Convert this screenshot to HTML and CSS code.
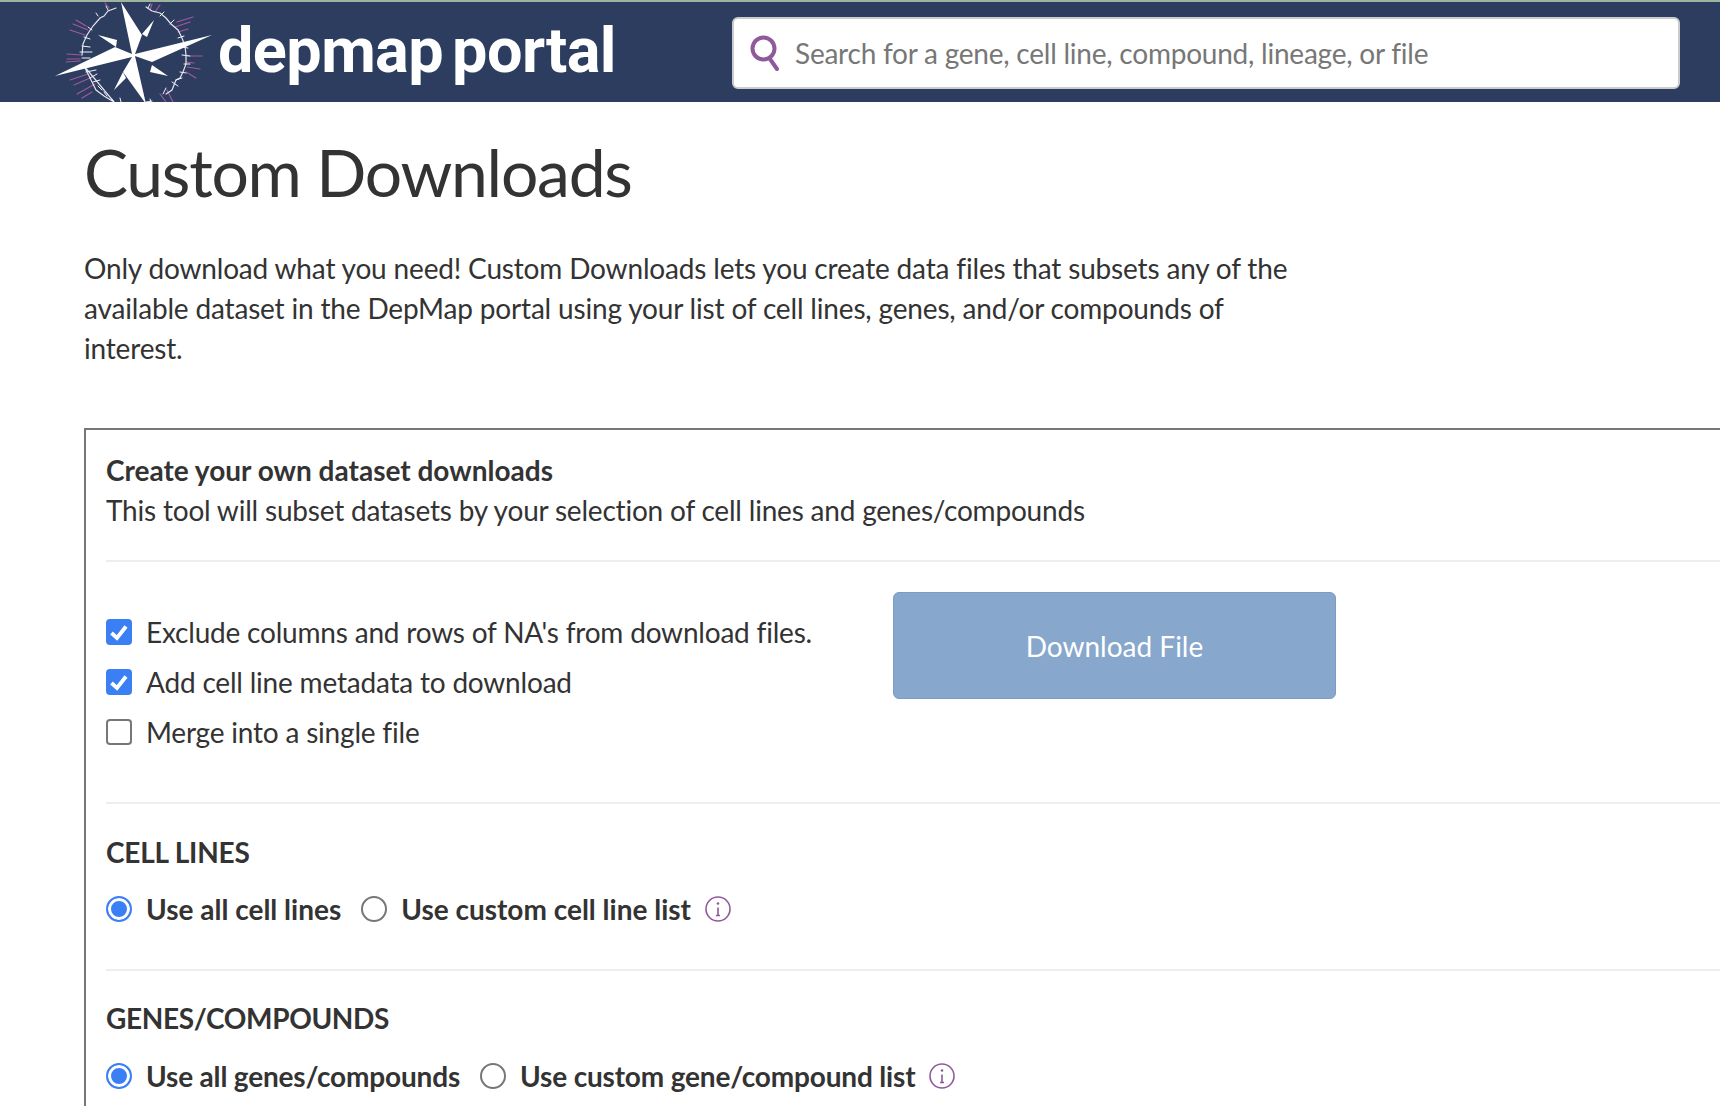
FILE: index.html
```html
<!DOCTYPE html>
<html lang="en">
<head>
  <meta charset="UTF-8">
  <title>Custom Downloads | DepMap Portal</title>
  <link rel="stylesheet" href="styles.css">
</head>
<body>

  <header class="topbar">
    <a class="brand" href="#">
      <svg class="brand-mark" viewBox="50 0 170 100" aria-hidden="true">
        <g fill="none" stroke-linecap="round">
          <path class="ticks-purple" d="M67 52L82 53M67 57L80 57M66 60L80 59M70 28L85 33M73 22L88 28M76 18L86 24M187 54L202 54M187 65L200 67M186 60L194 61M177 20L193 15M175 25L190 20M178 30L188 27M70 78L88 72M74 83L90 76M77 92L95 82M82 96L92 90M167 88L173 100M160 92L166 100M186 70L196 76M105 1L109 6M152 2L150 8M160 3L155 10M180 44L186 42"/>
          <path class="ring" d="M82 53L83 42L87 33L93 24L100 16L104 14L108 9L116 6M146 5L152 9L160 11L166 16L171 22L178 28L182 36L185 44L186 53L186 62L183 70L180 76L176 78L172 88L166 92M152 99L146 100M114 100L104 94L96 88L92 80L88 72L84 64Z"/>
          <path class="ticks-white" d="M84 35L90 37M82 44L90 45M80 50L92 50M82 56L90 56M83 62L88 61M86 70L96 68M90 76L97 72M93 80L100 78M98 84L102 88M104 90L107 94M112 97L114 100M120 96L121 100M150 97L151 100M163 92L166 86M172 80L178 84M176 78L182 76M180 70L186 71M184 62L190 62M182 53L190 54M182 45L188 46M178 36L184 34M170 22L174 18M160 14L164 10M148 6L150 2M108 8L106 4M98 14L96 11M88 25L92 28"/>
        </g>
        <path class="star" d="M121 0L142 33L135 52L212 33L152 60L135 54L146 102L123 70L132 55L55 74L115 45L132 52Z"/>
        <path class="star" d="M154 18L142 32L147 35ZM98 33L117 38L116 45ZM168 74L152 63L150 70ZM114 88L123 70L126 76Z"/>
      </svg>
      <span class="brand-name">depmap portal</span>
    </a>
    <div class="search">
      <svg class="search-icon" viewBox="0 0 31 36" aria-hidden="true">
        <circle cx="13.5" cy="13.5" r="11"/>
        <path d="M20 24L27 34"/>
      </svg>
      <span class="search-hint">Search for a gene, cell line, compound, lineage, or file</span>
    </div>
  </header>

  <main class="page">
    <h1>Custom Downloads</h1>
    <p class="intro">Only download what you need! Custom Downloads lets you create data files that subsets any of the available dataset in the DepMap portal using your list of cell lines, genes, and/or compounds of interest.</p>

    <section class="panel">
      <div class="panel-head">
        <strong>Create your own dataset downloads</strong><br>
        This tool will subset datasets by your selection of cell lines and genes/compounds
      </div>

      <div class="options">
        <div class="checks">
          <label class="check-row">
            <span class="box on"><svg viewBox="0 0 26 26"><path d="M5.5 14L11 19L20 7.5"/></svg></span>
            Exclude columns and rows of NA's from download files.
          </label>
          <label class="check-row">
            <span class="box on"><svg viewBox="0 0 26 26"><path d="M5.5 14L11 19L20 7.5"/></svg></span>
            Add cell line metadata to download
          </label>
          <label class="check-row">
            <span class="box"></span>
            Merge into a single file
          </label>
        </div>
        <button class="download">Download File</button>
      </div>

      <div class="group group-cells">
        <h3>CELL LINES</h3>
        <div class="radios">
          <label class="radio-item"><span class="dot on"></span>Use all cell lines</label>
          <label class="radio-item"><span class="dot"></span>Use custom cell line list</label>
          <svg class="info" viewBox="0 0 26 26" aria-hidden="true">
            <circle cx="13" cy="13" r="12"/>
            <path d="M13 11.5V19.5M11 19.5H15"/>
            <circle class="info-dot" cx="13" cy="7.5" r="1.3"/>
          </svg>
        </div>
      </div>

      <div class="group group-genes">
        <h3>GENES/COMPOUNDS</h3>
        <div class="radios">
          <label class="radio-item"><span class="dot on"></span>Use all genes/compounds</label>
          <label class="radio-item"><span class="dot"></span>Use custom gene/compound list</label>
          <svg class="info" viewBox="0 0 26 26" aria-hidden="true">
            <circle cx="13" cy="13" r="12"/>
            <path d="M13 11.5V19.5M11 19.5H15"/>
            <circle class="info-dot" cx="13" cy="7.5" r="1.3"/>
          </svg>
        </div>
      </div>
    </section>
  </main>

</body>
</html>
```

FILE: styles.css
```css
* {
  box-sizing: border-box;
}
html, body {
  height: 100%;
  overflow: hidden;
}
body {
  margin: 0;
  font-family: Lato, "Open Sans", sans-serif;
  font-size: 28px;
  line-height: 40px;
  letter-spacing: -0.2px;
  color: #333;
  background: #fff;
}

/* top bar */
.topbar {
  display: flex;
  align-items: center;
  height: 102px;
  background: #2d3d5f;
  border-top: 2px solid #9eb3a0;
}
.brand {
  display: flex;
  align-items: center;
  width: 732px;
  height: 100%;
  padding-left: 50px;
  color: #fff;
  text-decoration: none;
}
.brand-mark {
  width: 170px;
  height: 100px;
  flex: none;
}
.star {
  fill: #fff;
}
.ring {
  stroke: #e4e4ec;
  stroke-width: 1.2;
}
.ticks-white {
  stroke: #f1f1f5;
  stroke-width: 1;
}
.ticks-purple {
  stroke: #a0589f;
  stroke-width: 1.2;
}
.brand-name {
  margin: -3px 0 0 -2px;
  font-family: Roboto, sans-serif;
  font-size: 63px;
  font-weight: 700;
  letter-spacing: -0.6px;
  word-spacing: -6px;
  white-space: nowrap;
}
.search {
  display: flex;
  align-items: center;
  width: 948px;
  height: 72px;
  margin-top: 2px;
  padding-left: 16px;
  background: #fff;
  border: 2px solid #ccc;
  border-radius: 6px;
}
.search-icon {
  width: 31px;
  height: 36px;
  flex: none;
  fill: none;
  stroke: #8f5a9c;
  stroke-width: 4;
  stroke-linecap: round;
}
.search-hint {
  margin-left: 14px;
  letter-spacing: -0.23px;
  color: #777;
  white-space: nowrap;
}

/* page */
.page {
  padding-left: 84px;
}
h1 {
  margin: 31px 0 0;
  font-size: 66px;
  font-weight: 400;
  line-height: 78px;
  letter-spacing: -1.25px;
}
.intro {
  width: 1230px;
  margin: 37px 0 0;
  letter-spacing: -0.17px;
}
.panel {
  height: 678px;
  margin-top: 60px;
  padding-left: 20px;
  border: 2px solid #777;
  border-right: 0;
  border-bottom: 0;
}
.panel-head {
  height: 132px;
  padding-top: 20px;
  border-bottom: 2px solid #eee;
}
.panel-head strong {
  font-weight: 700;
  letter-spacing: 0;
}

/* checkboxes + button */
.options {
  display: flex;
  height: 242px;
  padding-top: 30px;
  border-bottom: 2px solid #eee;
}
.checks {
  width: 787px;
  padding-top: 15px;
}
.check-row {
  display: flex;
  align-items: center;
  gap: 14px;
  height: 50px;
}
.box {
  width: 26px;
  height: 26px;
  flex: none;
  background: #fff;
  border: 2px solid #777;
  border-radius: 4px;
}
.box.on {
  background: #3b7ff5;
  border: 0;
}
.box svg {
  display: block;
  fill: none;
  stroke: #fff;
  stroke-width: 3.8;
}
.download {
  width: 443px;
  height: 107px;
  font: inherit;
  letter-spacing: 0;
  color: #fff;
  background: #87a7cc;
  border: 1px solid #7d9cc2;
  border-radius: 6px;
}

/* radio groups */
.group {
  border-bottom: 2px solid #eee;
}
.group-cells {
  height: 167px;
  padding-top: 28px;
}
.group-genes {
  padding-top: 27px;
  border-bottom: 0;
}
h3 {
  margin: 0;
  font-size: 28px;
  font-weight: 700;
  letter-spacing: -0.2px;
}
.group-genes h3 {
  letter-spacing: -0.35px;
}
.radios {
  display: flex;
  align-items: center;
  gap: 20px;
  margin-top: 17px;
  font-weight: 700;
  letter-spacing: 0;
}
.group-genes .radios {
  margin-top: 18px;
  letter-spacing: -0.17px;
}
.radio-item {
  display: flex;
  align-items: center;
  gap: 14px;
}
.dot {
  width: 26px;
  height: 26px;
  flex: none;
  background: #fff;
  border: 2px solid #777;
  border-radius: 50%;
}
.dot.on {
  border: 2px solid #3b7ff5;
  background: #3b7ff5;
  box-shadow: inset 0 0 0 3px #fff;
}
.info {
  width: 26px;
  height: 26px;
  margin-left: -6px;
  flex: none;
  fill: none;
  stroke: #8f5a9c;
  stroke-width: 1.6;
}
.info-dot {
  fill: #8f5a9c;
  stroke: none;
}
```
